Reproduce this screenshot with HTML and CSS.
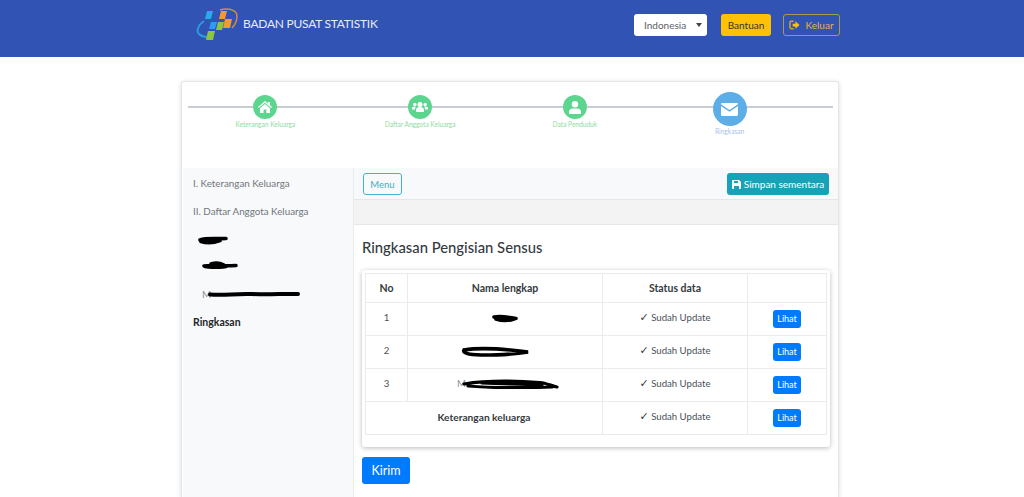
FILE: index.html
```html
<!DOCTYPE html>
<html lang="en">
<head>
    <meta charset="UTF-8">
    <meta name="viewport" content="width=device-width, initial-scale=1.0">
    <title>Badan Pusat Statistik</title>
    <link rel="stylesheet" href="styles.css">
</head>
<body>

<header class="navbar">
    <div class="brand">
        <svg class="logo" width="50" height="42" viewBox="0 0 50 42">
            <path d="M11 20C5 24 3 30 6 33C8 35 11 36 14 36" fill="none" stroke="#2a9fe0" stroke-width="1.800"/>
            <path d="M27 9C33 7 41 8 43.500 12.500C45 17 43 23 39 27" fill="none" stroke="#d98a3a" stroke-width="1.500"/>
            <path d="M14 10H20L18 18H12Z" fill="#29a9f2"/>
            <path d="M18 21H24L22 28H16Z" fill="#2f9cf0"/>
            <path d="M28 10H34L32 18H26Z" fill="#f39a2d"/>
            <path d="M32 18H39L37 27H30Z" fill="#f39a2d"/>
            <path d="M25 21H31L29 29H23Z" fill="#8cc63f"/>
            <path d="M15 30H22L20 39H13Z" fill="#8cc63f"/>
        </svg>
        <span class="brand-name">BADAN PUSAT STATISTIK</span>
    </div>
    <div class="nav-actions">
        <div class="lang-select">Indonesia<span class="caret"></span></div>
        <button class="btn btn-help">Bantuan</button>
        <button class="btn btn-exit">
            <svg width="11" height="10" viewBox="0 0 12 10"><path d="M5 1H2.500A1.500 1.500 0 0 0 1 2.500v5A1.500 1.500 0 0 0 2.500 9H5" fill="none" stroke="#d9a520" stroke-width="1.600"/><path d="M4 3.500h3V1l4.500 4L7 9V6.500H4z" fill="#ffc107"/></svg>
            Keluar
        </button>
    </div>
</header>

<main class="card">
    <div class="stepper">
        <div class="step">
            <div class="step-icon">
                <svg width="14" height="12" viewBox="0 0 14 12"><path d="M7 0L0 6l.8 1L7 1.800 13.200 7l.8-1-2-1.700V1h-2v1.600z" fill="#fff"/><path d="M7 3L2 7.200V12h3.600V8.500h2.800V12H12V7.200z" fill="#fff"/></svg>
            </div>
            <div class="step-label">Keterangan Keluarga</div>
        </div>
        <div class="step">
            <div class="step-icon">
                <svg width="16" height="12" viewBox="0 0 16 12"><circle cx="8" cy="3.600" r="2.500" fill="#fff"/><circle cx="2.800" cy="3.400" r="1.700" fill="#fff"/><circle cx="13.200" cy="3.400" r="1.700" fill="#fff"/><path d="M4 11V9c0-2 1.600-3 4-3s4 1 4 3v2z" fill="#fff"/><path d="M0 8.600V7.400C0 6.200 1 5.500 2.600 5.500c.6 0 1 .1 1.400.3C3.200 6.500 3 7.500 3 8.600z" fill="#fff"/><path d="M16 8.600V7.400C16 6.200 15 5.500 13.400 5.500c-.6 0-1 .1-1.400.3.8.7 1 1.700 1 2.800z" fill="#fff"/></svg>
            </div>
            <div class="step-label">Daftar Anggota Keluarga</div>
        </div>
        <div class="step">
            <div class="step-icon">
                <svg width="12" height="13" viewBox="0 0 12 13"><circle cx="6" cy="3.200" r="3.200" fill="#fff"/><path d="M0 13v-2c0-2.200 1.600-3.600 3.500-3.600h5c1.900 0 3.500 1.400 3.500 3.600v2z" fill="#fff"/></svg>
            </div>
            <div class="step-label">Data Penduduk</div>
        </div>
        <div class="step step-active">
            <div class="step-icon">
                <svg width="17" height="13" viewBox="0 0 17 13"><path d="M1.200 0h14.600c.7 0 1.200.5 1.200 1.200L8.500 7 0 1.200C0 .5.500 0 1.200 0z" fill="#fff"/><path d="M0 3l8.500 5.800L17 3v8.800c0 .7-.5 1.200-1.200 1.200H1.200C.5 13 0 12.500 0 11.800z" fill="#fff"/></svg>
            </div>
            <div class="step-label">Ringkasan</div>
        </div>
    </div>

    <div class="body-row">
        <aside class="sidebar">
            <a class="side-link">I. Keterangan Keluarga</a>
            <a class="side-link">II. Daftar Anggota Keluarga</a>
            <a class="side-link side-child side-first">
                <svg class="scribble" width="30" height="9" viewBox="0 0 30 9"><path d="M2 4C8 2 14 3 28 2.500M3 5.500C10 7.500 18 6 22 4.500" fill="none" stroke="#000" stroke-width="3.600" stroke-linecap="round"/></svg>
            </a>
            <a class="side-link side-child side-second">
                <svg class="scribble" width="36" height="8" viewBox="0 0 36 8"><path d="M2 5C10 3.500 14 5.500 34 4.500M9 3C14 1.500 18 2 22 4M3 5.500C10 6.500 18 6.500 24 5.500" fill="none" stroke="#000" stroke-width="3.600" stroke-linecap="round"/></svg>
            </a>
            <a class="side-link side-child side-third"><span class="remnant">M</span><svg class="scribble" width="92" height="7" viewBox="0 0 92 7"><path d="M2 3.500C20 4.500 24 2.500 44 3C60 4 76 2.500 90 3" fill="none" stroke="#000" stroke-width="4" stroke-linecap="round"/></svg></a>
            <a class="side-link side-current">Ringkasan</a>
        </aside>

        <section class="content">
            <div class="toolbar">
                <button class="btn btn-menu">Menu</button>
                <button class="btn btn-save">
                    <svg width="9" height="9" viewBox="0 0 9 9"><path d="M0 1a1 1 0 0 1 1-1h6l2 2v6a1 1 0 0 1-1 1H1a1 1 0 0 1-1-1z" fill="#fff"/><path d="M2 1h4v2H2zM2 6h5v3H2z" fill="#17a2b8"/></svg>
                    Simpan sementara
                </button>
            </div>
            <div class="band"></div>
            <div class="panel">
                <h2 class="panel-title">Ringkasan Pengisian Sensus</h2>
                <div class="table-card">
                    <table class="summary">
                        <colgroup>
                            <col class="col-no"><col class="col-name"><col class="col-status"><col class="col-action">
                        </colgroup>
                        <tr class="head">
                            <th>No</th><th>Nama lengkap</th><th>Status data</th><th></th>
                        </tr>
                        <tr>
                            <td>1</td>
                            <td><svg class="scribble" width="26" height="9" viewBox="0 0 26 9"><path d="M2 3C8 2 16 3 24 4.500M4 5C10 7 16 7 22 5" fill="none" stroke="#000" stroke-width="3.600" stroke-linecap="round"/></svg></td>
                            <td><span class="check">&#10003;</span> Sudah Update</td>
                            <td><button class="btn btn-view">Lihat</button></td>
                        </tr>
                        <tr>
                            <td>2</td>
                            <td><svg class="scribble scribble-left" width="69" height="11" viewBox="0 0 69 11"><path d="M3 4C18 1.500 44 3 67 6C50 9 20 10 8 8C4 7 2 6 3 4" fill="none" stroke="#000" stroke-width="3.600" stroke-linecap="round"/></svg></td>
                            <td><span class="check">&#10003;</span> Sudah Update</td>
                            <td><button class="btn btn-view">Lihat</button></td>
                        </tr>
                        <tr>
                            <td>3</td>
                            <td class="name-partial"><span class="remnant">M</span><svg class="scribble" width="97" height="10" viewBox="0 0 97 10"><path d="M2 5C20 2 50 1.500 78 3.500C84 4 90 7 95 8M6 7C30 9 60 9 90 8M20 4C50 5 60 5 80 6" fill="none" stroke="#000" stroke-width="3.200" stroke-linecap="round"/></svg></td>
                            <td><span class="check">&#10003;</span> Sudah Update</td>
                            <td><button class="btn btn-view">Lihat</button></td>
                        </tr>
                        <tr>
                            <td colspan="2" class="strong-cell">Keterangan keluarga</td>
                            <td><span class="check">&#10003;</span> Sudah Update</td>
                            <td><button class="btn btn-view">Lihat</button></td>
                        </tr>
                    </table>
                </div>
                <button class="btn btn-send">Kirim</button>
            </div>
        </section>
    </div>
</main>

</body>
</html>
```

FILE: styles.css
```css
body {
    margin: 0;
    background: #fff;
    font-family: Lato, "Open Sans", sans-serif;
    color: #495057;
    font-size: 10px;
}
button {
    font-family: inherit;
}
.navbar {
    height: 57px;
    background: #3053b4;
    display: flex;
    justify-content: space-between;
    align-items: flex-start;
    padding: 0 184px 0 193px;
}
.brand {
    display: flex;
    align-items: flex-start;
}
.logo {
    display: block;
    margin-top: 1px;
}
.brand-name {
    color: #e8ecf8;
    font-size: 12px;
    letter-spacing: -.25px;
    line-height: 16px;
    margin-top: 15.5px;
}
.nav-actions {
    display: flex;
    gap: 14px;
    margin-top: 14px;
}
.btn {
    border: 1px solid transparent;
    border-radius: 3px;
    cursor: pointer;
    padding: 0;
}
.lang-select {
    width: 73px;
    height: 22px;
    box-sizing: border-box;
    background: #fff;
    border-radius: 3px;
    color: #5b6168;
    line-height: 23px;
    padding-left: 10px;
    position: relative;
}
.caret {
    position: absolute;
    right: 5px;
    top: 9px;
    border-left: 3px solid transparent;
    border-right: 3px solid transparent;
    border-top: 4px solid #444;
}
.btn-help {
    width: 50px;
    height: 22px;
    background: #ffc107;
    color: #333;
    font-size: 10px;
    margin-right: -2px;
}
.btn-exit {
    width: 57px;
    height: 22px;
    background: transparent;
    border-color: #a89a55;
    color: #e6b43a;
    font-size: 10px;
    display: flex;
    align-items: center;
    justify-content: center;
    gap: 5px;
}
.card {
    width: 655px;
    height: 415px;
    margin: 24px 0 0 181px;
    border: 1px solid #e6e6e6;
    border-bottom: 0;
    border-radius: 3px 3px 0 0;
    box-shadow: 0 1px 5px rgba(0, 0, 0, .14);
    padding-left: 1px;
    background: #fff;
}
.stepper {
    height: 86px;
    box-sizing: border-box;
    margin: 0 5px;
    padding-right: 26px;
    display: flex;
    position: relative;
}
.stepper::before {
    content: "";
    position: absolute;
    left: 0;
    right: 0;
    top: 24px;
    height: 2px;
    background: #c9ccd3;
}
.step {
    flex: 1;
    display: flex;
    flex-direction: column;
    align-items: center;
    position: relative;
    padding-top: 13px;
}
.step-icon {
    width: 24px;
    height: 24px;
    border-radius: 50%;
    background: #5cd68e;
    display: flex;
    align-items: center;
    justify-content: center;
}
.step-label {
    font-size: 6.6px;
    line-height: 8px;
    color: #8fdca2;
    margin-top: 1px;
}
.step-active {
    padding-top: 10px;
}
.step-active .step-icon {
    width: 34px;
    height: 34px;
    background: #5dade7;
}
.step-active .step-label {
    color: #a9bfec;
}
.body-row {
    display: flex;
}
.sidebar {
    flex: none;
    width: 170px;
    height: 329px;
    box-sizing: border-box;
    background: #f8f9fa;
    padding: 7px 0 0 10px;
    display: flex;
    flex-direction: column;
}
.side-link {
    height: 27.8px;
    line-height: 16px;
    font-size: 9.8px;
    color: #6f767d;
}
.side-child {
    padding-left: 9px;
}
.side-first {
    padding-left: 5px;
}
.side-second .scribble {
    margin-top: -6px;
}
.side-third .scribble {
    margin: -2px 0 0 -3px;
}
.side-current {
    color: #212529;
    font-size: 10.5px;
    font-weight: 700;
}
.remnant {
    color: #8a9299;
}
.scribble {
    vertical-align: middle;
}
.scribble-left {
    margin-right: 20px;
}
.content {
    flex: 1;
    border-left: 1px solid #e9ecef;
}
.toolbar {
    height: 32px;
    box-sizing: border-box;
    background: #f8f9fa;
    border-bottom: 1px solid #e4e6e8;
    display: flex;
    justify-content: space-between;
    padding: 5px 9px 0 9px;
}
.btn-menu {
    width: 39px;
    height: 22px;
    background: transparent;
    border-color: #45b5c6;
    color: #3fb0c2;
    font-size: 9.5px;
}
.btn-save {
    width: 102px;
    height: 22px;
    background: #17a2b8;
    color: #fff;
    font-size: 10px;
    display: flex;
    align-items: center;
    justify-content: center;
    gap: 3px;
}
.band {
    height: 24px;
    background: #f3f3f3;
    border-bottom: 1px solid #e4e6e8;
}
.panel {
    padding: 12px 8px 0 8px;
}
.panel-title {
    margin: 0 0 13px;
    font-size: 14.8px;
    line-height: 20px;
    font-weight: 500;
    color: #343a40;
}
.table-card {
    width: 468px;
    height: 177px;
    box-sizing: border-box;
    padding: 3px;
    border-radius: 3px;
    background: #fff;
    box-shadow: 0 1px 5px rgba(0, 0, 0, .28);
}
.summary {
    width: 461px;
    table-layout: fixed;
    border-collapse: collapse;
}
.col-no { width: 42px; }
.col-name { width: 195px; }
.col-status { width: 145px; }
.col-action { width: 79px; }
.summary th, .summary td {
    border: 1px solid #e9ecef;
    text-align: center;
    padding: 0 0 3px;
    height: 29px;
    font-size: 9.6px;
    color: #495057;
}
.summary th {
    height: 28px;
    padding: 0;
    font-size: 10.5px;
    color: #343a40;
    font-weight: 700;
}
.summary .name-partial {
    padding-left: 6px;
}
.name-partial .scribble {
    margin-left: -4px;
}
.summary .strong-cell {
    font-size: 10.2px;
    font-weight: 700;
    color: #343a40;
}
.check {
    font-family: "DejaVu Sans", sans-serif;
    font-size: 11px;
    font-weight: 700;
    color: #343a40;
}
.btn-view {
    width: 28px;
    height: 18px;
    margin-top: 2px;
    background: #007bff;
    color: #fff;
    font-size: 9px;
    vertical-align: middle;
}
.btn-send {
    display: block;
    margin-top: 10px;
    width: 48px;
    height: 27px;
    background: #007bff;
    color: #fff;
    font-size: 12.5px;
}
```
